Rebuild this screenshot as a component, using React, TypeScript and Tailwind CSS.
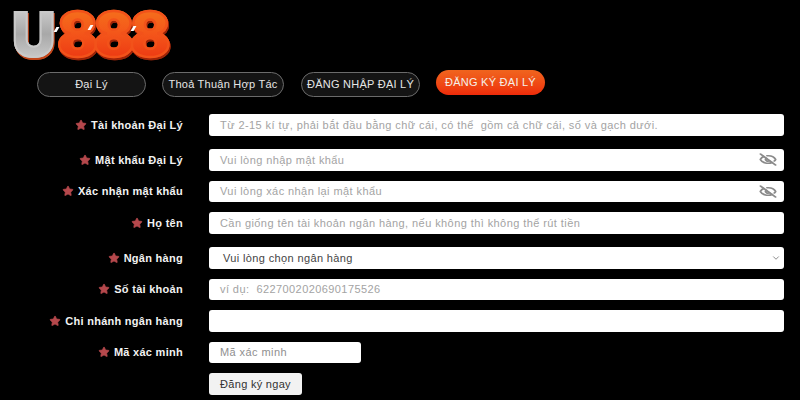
import React from 'react';
import { ChevronDown, EyeOff, Star } from 'lucide-react';

const tabClass =
  'h-[25px] rounded-full border border-[#6b6b6b] bg-[#141414] text-[11px] tracking-[0.25px] text-[#e6e6e6] flex items-center justify-center';

const Label = ({ text }: { text: string }) => (
  <div className="w-[183px] shrink-0 flex items-center justify-end gap-[4px] text-[11px] font-bold tracking-[0.28px] text-[#f2f2f2]">
    <Star className="w-[12px] h-[12px] text-[#b5484c] fill-[#b5484c]" strokeWidth={1.5} />
    <span>{text}</span>
  </div>
);

const Field = ({ text, eye }: { text: string; eye?: boolean }) => (
  <div className="h-[21.5px] w-[575px] ml-[26px] rounded-[3px] bg-white flex items-center justify-between pl-[11px] pr-[7px]">
    <span className="text-[11px] tracking-[0.42px] whitespace-pre text-[#a3a3a3]">{text}</span>
    {eye && <EyeOff className="w-[18px] h-[13px] text-[#8a8a8a]" strokeWidth={2.8} preserveAspectRatio="none" />}
  </div>
);

export default function App() {
  return (
    <div className="w-[800px] h-[400px] overflow-hidden bg-black font-['Liberation_Sans',Arial,sans-serif]">
      {/* Logo */}
      <div className="h-[70px]">
        <div className="relative -top-[2px] pl-[10px] flex items-start font-['Inter',sans-serif] font-black leading-[72px] text-[60px]">
          <span className="relative z-10 px-[2px] bg-gradient-to-b from-[#dcdcdc] via-[#a8a8a8] to-[#d9d9d9] bg-clip-text text-transparent [-webkit-text-stroke:2px_#c9c9c9] drop-shadow-[1px_2px_0_#c2461a]">
            U
          </span>
          <span className="relative z-10 -ml-[2px] pl-[2px] pr-[8px] tracking-[-4.5px] bg-gradient-to-b from-[#f57a1c] via-[#f4551a] to-[#e8260f] bg-clip-text text-transparent [-webkit-text-stroke:2.5px_#f2521a] drop-shadow-[1px_2px_0_#9c2408]">
            888
          </span>
          {/* white slivers behind the digits */}
          <div className="absolute z-20 left-[55px] top-[29px] w-[3px] h-[5px] bg-white -skew-x-[30deg]" />
          <div className="absolute z-20 left-[89px] top-[27px] w-[3px] h-[5px] bg-white -skew-x-[30deg]" />
          <div className="absolute z-20 left-[132px] top-[28px] w-[3px] h-[5px] bg-white -skew-x-[30deg]" />
        </div>
      </div>

      {/* Tabs */}
      <div className="flex items-start pl-[37px]">
        <div className={`${tabClass} mt-[2px] w-[109px]`}>Đại Lý</div>
        <div className={`${tabClass} mt-[2px] ml-[16px] w-[122px]`}>Thoả Thuận Hợp Tác</div>
        <div className={`${tabClass} mt-[2px] ml-[17px] w-[119px]`}>ĐĂNG NHẬP ĐẠI LÝ</div>
        <div className="h-[25px] w-[109px] ml-[16px] rounded-full bg-gradient-to-b from-[#f0641e] to-[#ee2a0a] text-[11px] tracking-[0.25px] text-[#f5f0ea] flex items-center justify-center">
          ĐĂNG KÝ ĐẠI LÝ
        </div>
      </div>

      {/* Form */}
      <div className="flex flex-col pt-[17px]">
        <div className="flex">
          <Label text="Tài khoản Đại Lý" />
          <Field text="Từ 2-15 kí tự, phải bắt đầu bằng chữ cái, có thể  gồm cả chữ cái, số và gạch dưới." />
        </div>
        <div className="flex mt-[13.5px]">
          <Label text="Mật khẩu Đại Lý" />
          <Field text="Vui lòng nhập mật khẩu" eye />
        </div>
        <div className="flex mt-[10px]">
          <Label text="Xác nhận mật khẩu" />
          <Field text="Vui lòng xác nhận lại mật khẩu" eye />
        </div>
        <div className="flex mt-[10px]">
          <Label text="Họ tên" />
          <Field text="Cần giống tên tài khoản ngân hàng, nếu không thì không thể rút tiền" />
        </div>
        <div className="flex mt-[13.5px]">
          <Label text="Ngân hàng" />
          <div className="h-[21.5px] w-[575px] ml-[26px] rounded-[3px] bg-white flex items-center justify-between pl-[14px] pr-[3px]">
            <span className="text-[11px] tracking-[0.37px] text-[#444]">Vui lòng chọn ngân hàng</span>
            <ChevronDown className="w-[10px] h-[10px] text-[#777]" />
          </div>
        </div>
        <div className="flex mt-[10px]">
          <Label text="Số tài khoản" />
          <Field text="ví dụ:  6227002020690175526" />
        </div>
        <div className="flex mt-[10px]">
          <Label text="Chi nhánh ngân hàng" />
          <Field text="" />
        </div>
        <div className="flex mt-[10px]">
          <Label text="Mã xác minh" />
          <div className="h-[21.5px] w-[152px] ml-[26px] rounded-[3px] bg-white flex items-center pl-[11px]">
            <span className="text-[11px] tracking-[0.42px] text-[#8f8f8f]">Mã xác minh</span>
          </div>
        </div>
        <div className="ml-[209px] mt-[10px] h-[21.5px] w-[93px] rounded-[3px] bg-[#f2f2f2] flex items-center justify-center text-[11px] tracking-[0.3px] text-[#333]">
          Đăng ký ngay
        </div>
      </div>
    </div>
  );
}
